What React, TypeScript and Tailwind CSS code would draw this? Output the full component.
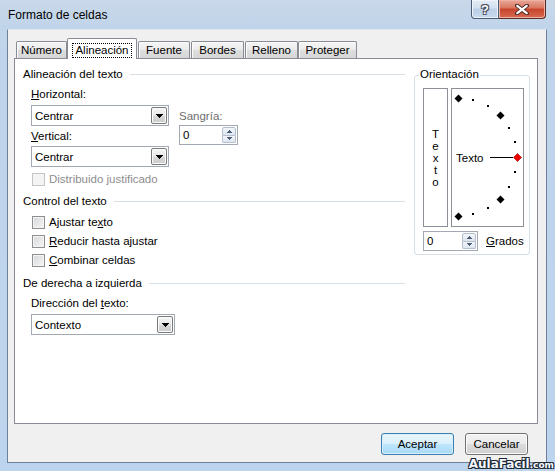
import React from "react";

const DropBtn = () => (
  <div className="w-[16px] h-[17px] mr-[1px] border border-[#7a7a7a] rounded-[2px] bg-[linear-gradient(#f6f6f6,#e6e6e6_50%,#d6d6d6_51%,#cdcdcd)] shadow-[inset_0_0_0_1px_#fcfcfc] flex items-center justify-center">
    <svg width="7" height="4" viewBox="0 0 7 4" shapeRendering="crispEdges">
      <polygon points="0,0 7,0 3.5,4" fill="#000" />
    </svg>
  </div>
);

const Select = ({ value, w, mt }: { value: string; w: string; mt: string }) => (
  <div className={`${w} ${mt} h-[21px] border border-[#a3a9b3] bg-white flex items-center`}>
    <span className="pl-[3px] flex-1">{value}</span>
    <DropBtn />
  </div>
);

const Spin = ({ w, mt }: { w: string; mt: string }) => (
  <div className={`${w} ${mt} h-[20px] border border-[#a3a9b3] bg-white flex`}>
    <span className="flex-1 pl-[3px] leading-[18px]">0</span>
    <div className="w-[14px] m-[1px] flex flex-col">
      <div className="flex-1 border border-[#b3bfcf] rounded-t-[2px] bg-[linear-gradient(#f3f6fa,#dde5ef)] flex items-center justify-center">
        <svg width="5" height="3" viewBox="0 0 5 3" shapeRendering="crispEdges">
          <polygon points="2.5,0 5,3 0,3" fill="#4a5a78" />
        </svg>
      </div>
      <div className="flex-1 border border-t-0 border-[#b3bfcf] rounded-b-[2px] bg-[linear-gradient(#f3f6fa,#dde5ef)] flex items-center justify-center">
        <svg width="5" height="3" viewBox="0 0 5 3" shapeRendering="crispEdges">
          <polygon points="0,0 5,0 2.5,3" fill="#4a5a78" />
        </svg>
      </div>
    </div>
  </div>
);

const Group = ({ children, mt }: { children: React.ReactNode; mt: string }) => (
  <div className={`${mt} h-[14px] flex items-center`}>
    <span>{children}</span>
    <span className="flex-1 h-px bg-[#d5dfe5] ml-[7px]" />
  </div>
);

const Check = ({ children, mt, disabled }: { children: React.ReactNode; mt: string; disabled?: boolean }) => (
  <div className={`${mt} h-[14px] pl-[9px] flex items-center`}>
    {disabled ? (
      <span className="w-[13px] h-[13px] border border-[#c5c5c5] bg-[#f4f4f4]" />
    ) : (
      <span className="w-[13px] h-[13px] border border-[#8e8f8f] bg-[linear-gradient(135deg,#d4d6d9,#f7f7f7)] shadow-[inset_0_0_0_1px_#f4f4f4]" />
    )}
    <span className={`ml-[4px] ${disabled ? "text-[#8d8d8d]" : ""}`}>{children}</span>
  </div>
);

const Tab = ({ label, w, ml }: { label: string; w: string; ml: string }) => (
  <div className={`${w} ${ml} h-[17px] border border-b-0 border-[#898c95] rounded-t-[2px] bg-[linear-gradient(#f5f5f5,#ebebeb_50%,#dedede_51%,#d6d6d6)] shadow-[inset_1px_1px_0_#fbfbfb] flex items-center justify-center`}>
    {label}
  </div>
);

function Dial() {
  const cx = 6;
  const cy = 68;
  const r = 59;
  const big = [90, 45, 0, -45, -90];
  const small = [75, 60, 30, 15, -15, -30, -60, -75];
  const pt = (a: number) => [cx + r * Math.cos((a * Math.PI) / 180), cy - r * Math.sin((a * Math.PI) / 180)];
  return (
    <svg width="71" height="137" viewBox="0 0 71 137">
      {small.map((a) => {
        const [x, y] = pt(a);
        return <rect key={a} x={Math.round(x) - 1} y={Math.round(y) - 1} width="2" height="2" fill="#000" shapeRendering="crispEdges" />;
      })}
      {big.map((a) => {
        const [x0, y0] = pt(a);
        const x = Math.round(x0) + 0.5;
        const y = Math.round(y0) + 0.5;
        const red = a === 0;
        return (
          <polygon
            key={a}
            points={`${x},${y - 4} ${x + 4},${y} ${x},${y + 4} ${x - 4},${y}`}
            fill={red ? "#f00000" : "#000"}
            stroke={red ? "#900000" : "none"}
            strokeWidth="0.6"
          />
        );
      })}
      <line x1="38" y1="68.5" x2="61" y2="68.5" stroke="#000" strokeWidth="1" shapeRendering="crispEdges" />
      <text x="4" y="73" fontSize="11.5" fontFamily="'Liberation Sans', Arial, sans-serif" fill="#000">
        Texto
      </text>
    </svg>
  );
}

export default function App() {
  return (
    <div className="relative w-[555px] h-[471px] overflow-hidden bg-[linear-gradient(180deg,#c9d8e9_0px,#c0d4ea_29px,#bdd4ee_100%)] font-['Liberation_Sans',Arial,sans-serif] text-[11.5px] leading-[14px] text-black">
      {/* title bar */}
      <div className="h-[29px] flex">
        <div className="flex-1 pl-[8px] pt-[8px] text-[12px] leading-[15px]">Formato de celdas</div>
        <div className="flex mr-[9px] h-[19px]">
          <div className="w-[28px] h-[19px] border border-t-0 border-[#4a5c74] rounded-bl-[4px] bg-[linear-gradient(#e4ecf6,#d3e0ef_45%,#bccfe6_50%,#c9daee)] shadow-[inset_0_0_0_1px_#eef4fb] flex items-center justify-center">
            <span className="font-bold text-[13px] leading-[13px] text-white [text-shadow:_0_0_1px_#223,_1px_1px_0_#556,_-1px_-1px_0_#556,_1px_-1px_0_#556,_-1px_1px_0_#556]">?</span>
          </div>
          <div className="w-[47px] h-[19px] border border-t-0 border-l-0 border-[#5b2a22] rounded-br-[4px] bg-[linear-gradient(#e9a99a,#d8745f_45%,#c7432c_50%,#d66a4f)] shadow-[inset_0_0_0_1px_#edb4a6] flex items-center justify-center">
            <svg width="14" height="11" viewBox="0 0 14 11">
              <path d="M2 1.5 L12 9.5 M12 1.5 L2 9.5" stroke="#4a2a26" strokeWidth="4" strokeLinecap="round" />
              <path d="M2.3 1.8 L11.7 9.2 M11.7 1.8 L2.3 9.2" stroke="#fff" strokeWidth="2.2" strokeLinecap="round" />
            </svg>
          </div>
        </div>
      </div>

      {/* client area */}
      <div className="ml-[7px] w-[540px] h-[434px] border border-[#6f819a] border-t-[#dfe8f2] bg-[#f0f0f0] flex flex-col">
        <div className="mt-[8px] px-[6px]">
          {/* tabs */}
          <div className="flex items-end h-[20px] pl-[2px]">
            <Tab label="Número" w="w-[51px]" ml="ml-0" />
            <div className="w-[70px] h-[21px] -mb-px relative z-10 bg-white border border-b-0 border-[#898c95] rounded-t-[2px] flex justify-center pt-[4px]">
              <span className="h-[15px] px-[2px] border border-dotted border-black leading-[13px]">Alineación</span>
            </div>
            <Tab label="Fuente" w="w-[52px]" ml="ml-[1px]" />
            <Tab label="Bordes" w="w-[53px]" ml="ml-[1px]" />
            <Tab label="Relleno" w="w-[53px]" ml="ml-[1px]" />
            <Tab label="Proteger" w="w-[59px]" ml="ml-0" />
          </div>

          {/* panel */}
          <div className="w-[524px] h-[366px] border border-[#898c95] bg-white flex pl-[8px] pt-[8px]">
            <div className="w-[382px] flex flex-col">
              <Group mt="mt-0">Alineación del texto</Group>
              <div className="mt-[6px] pl-[8px] flex">
                <div className="w-[138px] flex flex-col">
                  <div>
                    <u>H</u>orizontal:
                  </div>
                  <Select value="Centrar" w="w-[138px]" mt="mt-[4px]" />
                  <div className="mt-[3px]">
                    <u>V</u>ertical:
                  </div>
                  <Select value="Centrar" w="w-[138px]" mt="mt-[3px]" />
                </div>
                <div className="ml-[10px] pt-[22px] flex flex-col">
                  <div className="text-[#6d6d6d]">Sangría:</div>
                  <Spin w="w-[59px]" mt="mt-[2px]" />
                </div>
              </div>
              <Check mt="mt-[5px]" disabled>
                Distribuido justificado
              </Check>
              <Group mt="mt-[8px]">Control del texto</Group>
              <Check mt="mt-[7px]">
                Ajustar te<u>x</u>to
              </Check>
              <Check mt="mt-[5px]">
                <u>R</u>educir hasta ajustar
              </Check>
              <Check mt="mt-[5px]">
                <u>C</u>ombinar celdas
              </Check>
              <Group mt="mt-[9px]">De derecha a izquierda</Group>
              <div className="mt-[6px] pl-[8px]">
                Dirección del <u>t</u>exto:
              </div>
              <div className="pl-[8px]">
                <Select value="Contexto" w="w-[144px]" mt="mt-[4px]" />
              </div>
            </div>

            {/* Orientación */}
            <div className="ml-[9px] mt-[8px] relative w-[116px] h-[180px] border border-[#d5dfe5] rounded-[3px] pl-[8px] pt-[12px]">
              <span className="absolute left-[4px] top-[-9px] px-[1px] bg-white">Orientación</span>
              <div className="flex gap-[3px]">
                <div className="w-[25px] h-[139px] border border-[#8c8f96] flex flex-col items-center justify-center leading-[12px]">
                  <span>T</span>
                  <span>e</span>
                  <span>x</span>
                  <span>t</span>
                  <span>o</span>
                </div>
                <div className="w-[73px] h-[139px] border border-[#8c8f96]">
                  <Dial />
                </div>
              </div>
              <div className="mt-[4px] flex items-center">
                <Spin w="w-[55px]" mt="mt-0" />
                <span className="ml-[8px]">
                  <u>G</u>rados
                </span>
              </div>
            </div>
          </div>
        </div>

        {/* buttons */}
        <div className="mt-[9px] flex justify-end gap-[11px] pr-[18px]">
          <div className="w-[73px] h-[22px] border border-[#3c7fb1] rounded-[3px] bg-[linear-gradient(#eaf6fd,#d9f0fc_50%,#bee6fd_51%,#a7d9f5)] shadow-[inset_0_0_0_1px_#d8eefb] flex items-center justify-center">
            Aceptar
          </div>
          <div className="w-[63px] h-[22px] border border-[#707070] rounded-[3px] bg-[linear-gradient(#f2f2f2,#ebebeb_50%,#dddddd_51%,#cfcfcf)] shadow-[inset_0_0_0_1px_#fcfcfc] flex items-center justify-center">
            Cancelar
          </div>
        </div>
      </div>

      {/* watermark */}
      <div className="absolute right-[1px] bottom-0 h-[13px] flex items-end font-['DejaVu_Sans',sans-serif] font-bold text-[#f4f8ff] [text-shadow:_1px_1px_0_#1b2430,_-1px_-1px_0_#1b2430,_1px_-1px_0_#1b2430,_-1px_1px_0_#1b2430]">
        <span className="text-[12px] leading-[13px]">AulaFacil</span>
        <span className="text-[9px] leading-[11px]">.com</span>
      </div>
    </div>
  );
}
